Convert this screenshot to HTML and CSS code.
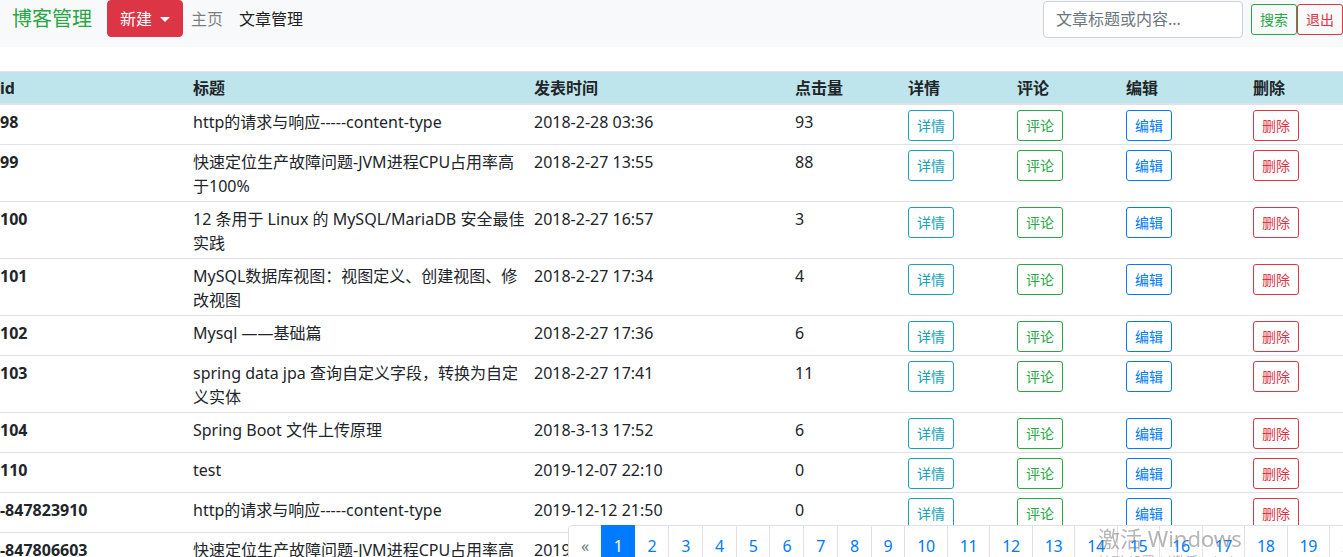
FILE: index.html
```html
<!DOCTYPE html>
<html lang="zh-CN">
<head>
<meta charset="utf-8">
<title>博客管理</title>
<link rel="stylesheet" href="styles.css">
</head>
<body>
<nav class="navbar">
  <div class="nav-left">
    <a class="brand" href="#">博客管理</a>
    <button class="btn btn-danger dropdown-toggle">新建</button>
    <a class="nav-link muted" href="#">主页</a>
    <a class="nav-link active" href="#">文章管理</a>
  </div>
  <form class="search-form">
    <input class="form-control" type="search" placeholder="文章标题或内容...">
    <button type="button" class="btn btn-sm outline-success">搜索</button>
    <button type="button" class="btn btn-sm outline-danger">退出</button>
  </form>
</nav>

<table class="table">
  <colgroup>
    <col class="c-id"><col class="c-title"><col class="c-time"><col class="c-click">
    <col class="c-act"><col class="c-act"><col class="c-edit"><col class="c-del">
  </colgroup>
  <thead>
    <tr>
      <th>id</th><th>标题</th><th>发表时间</th><th>点击量</th><th>详情</th><th>评论</th><th>编辑</th><th>删除</th>
    </tr>
  </thead>
  <tbody>
    <tr><th class="rowid">98</th><td>http的请求与响应-----content-type</td><td>2018-2-28 03:36</td><td>93</td>
      <td><button class="btn btn-sm outline-info">详情</button></td><td><button class="btn btn-sm outline-success">评论</button></td><td><button class="btn btn-sm outline-primary">编辑</button></td><td><button class="btn btn-sm outline-danger">删除</button></td></tr>
    <tr><th class="rowid">99</th><td>快速定位生产故障问题-JVM进程CPU占用率高于100%</td><td>2018-2-27 13:55</td><td>88</td>
      <td><button class="btn btn-sm outline-info">详情</button></td><td><button class="btn btn-sm outline-success">评论</button></td><td><button class="btn btn-sm outline-primary">编辑</button></td><td><button class="btn btn-sm outline-danger">删除</button></td></tr>
    <tr><th class="rowid">100</th><td>12 条用于 Linux 的 MySQL/MariaDB 安全最佳实践</td><td>2018-2-27 16:57</td><td>3</td>
      <td><button class="btn btn-sm outline-info">详情</button></td><td><button class="btn btn-sm outline-success">评论</button></td><td><button class="btn btn-sm outline-primary">编辑</button></td><td><button class="btn btn-sm outline-danger">删除</button></td></tr>
    <tr><th class="rowid">101</th><td>MySQL数据库视图：视图定义、创建视图、修改视图</td><td>2018-2-27 17:34</td><td>4</td>
      <td><button class="btn btn-sm outline-info">详情</button></td><td><button class="btn btn-sm outline-success">评论</button></td><td><button class="btn btn-sm outline-primary">编辑</button></td><td><button class="btn btn-sm outline-danger">删除</button></td></tr>
    <tr><th class="rowid">102</th><td>Mysql ——基础篇</td><td>2018-2-27 17:36</td><td>6</td>
      <td><button class="btn btn-sm outline-info">详情</button></td><td><button class="btn btn-sm outline-success">评论</button></td><td><button class="btn btn-sm outline-primary">编辑</button></td><td><button class="btn btn-sm outline-danger">删除</button></td></tr>
    <tr><th class="rowid">103</th><td>spring data jpa 查询自定义字段，转换为自定义实体</td><td>2018-2-27 17:41</td><td>11</td>
      <td><button class="btn btn-sm outline-info">详情</button></td><td><button class="btn btn-sm outline-success">评论</button></td><td><button class="btn btn-sm outline-primary">编辑</button></td><td><button class="btn btn-sm outline-danger">删除</button></td></tr>
    <tr><th class="rowid">104</th><td>Spring Boot 文件上传原理</td><td>2018-3-13 17:52</td><td>6</td>
      <td><button class="btn btn-sm outline-info">详情</button></td><td><button class="btn btn-sm outline-success">评论</button></td><td><button class="btn btn-sm outline-primary">编辑</button></td><td><button class="btn btn-sm outline-danger">删除</button></td></tr>
    <tr><th class="rowid">110</th><td>test</td><td>2019-12-07 22:10</td><td>0</td>
      <td><button class="btn btn-sm outline-info">详情</button></td><td><button class="btn btn-sm outline-success">评论</button></td><td><button class="btn btn-sm outline-primary">编辑</button></td><td><button class="btn btn-sm outline-danger">删除</button></td></tr>
    <tr><th class="rowid">-847823910</th><td>http的请求与响应-----content-type</td><td>2019-12-12 21:50</td><td>0</td>
      <td><button class="btn btn-sm outline-info">详情</button></td><td><button class="btn btn-sm outline-success">评论</button></td><td><button class="btn btn-sm outline-primary">编辑</button></td><td><button class="btn btn-sm outline-danger">删除</button></td></tr>
    <tr><th class="rowid">-847806603</th><td>快速定位生产故障问题-JVM进程CPU占用率高于100%</td><td>2019-12-12 21:50</td><td>0</td>
      <td><button class="btn btn-sm outline-info">详情</button></td><td><button class="btn btn-sm outline-success">评论</button></td><td><button class="btn btn-sm outline-primary">编辑</button></td><td><button class="btn btn-sm outline-danger">删除</button></td></tr>
  </tbody>
</table>

<ul class="pagination">
  <li class="page-item disabled"><a class="page-link" href="#">«</a></li>
  <li class="page-item active"><a class="page-link" href="#">1</a></li>
  <li class="page-item"><a class="page-link" href="#">2</a></li>
  <li class="page-item"><a class="page-link" href="#">3</a></li>
  <li class="page-item"><a class="page-link" href="#">4</a></li>
  <li class="page-item"><a class="page-link" href="#">5</a></li>
  <li class="page-item"><a class="page-link" href="#">6</a></li>
  <li class="page-item"><a class="page-link" href="#">7</a></li>
  <li class="page-item"><a class="page-link" href="#">8</a></li>
  <li class="page-item"><a class="page-link" href="#">9</a></li>
  <li class="page-item"><a class="page-link" href="#">10</a></li>
  <li class="page-item"><a class="page-link" href="#">11</a></li>
  <li class="page-item"><a class="page-link" href="#">12</a></li>
  <li class="page-item"><a class="page-link" href="#">13</a></li>
  <li class="page-item"><a class="page-link" href="#">14</a></li>
  <li class="page-item"><a class="page-link" href="#">15</a></li>
  <li class="page-item"><a class="page-link" href="#">16</a></li>
  <li class="page-item"><a class="page-link" href="#">17</a></li>
  <li class="page-item"><a class="page-link" href="#">18</a></li>
  <li class="page-item"><a class="page-link" href="#">19</a></li>
  <li class="page-item"><a class="page-link" href="#">20</a></li>
  <li class="page-item"><a class="page-link" href="#">»</a></li>
</ul>

<div class="watermark">
  <div class="wm-title">激活 Windows</div>
  <div class="wm-sub">转到“设置”以激活 Windows。</div>
</div>
</body>
</html>
```

FILE: styles.css
```css
*, *::before, *::after { box-sizing: border-box; }

html, body {
  margin: 0;
  overflow: hidden;
}

body {
  font-family: "Noto Sans", "Noto Sans CJK SC", sans-serif;
  font-size: 16px;
  line-height: 1.5;
  color: #212529;
  background: #fff;
}

a { text-decoration: none; }

/* navbar */
.navbar {
  display: flex;
  justify-content: space-between;
  align-items: flex-start;
  background: #f8f9fa;
  height: 47px;
  padding: 0 0 0 12px;
}
.nav-left {
  display: flex;
  align-items: center;
  height: 37px;
}
.brand {
  font-size: 20px;
  line-height: 30px;
  color: #28a745;
  margin-right: 15px;
}
.nav-link {
  padding: 0 8px;
  line-height: 24px;
}
.nav-link.muted { color: rgba(0,0,0,.5); }
.nav-link.active { color: rgba(0,0,0,.9); }

.btn {
  display: inline-block;
  font-family: inherit;
  font-size: 16px;
  line-height: 1.5;
  padding: 6px 12px;
  border: 1px solid transparent;
  border-radius: 4px;
  background: transparent;
  cursor: pointer;
  white-space: nowrap;
}
.btn-danger {
  background: #dc3545;
  border-color: #dc3545;
  color: #fff;
  height: 37px;
  padding: 5px 12px;
}
.dropdown-toggle::after {
  content: "";
  display: inline-block;
  margin-left: 8px;
  vertical-align: 3px;
  border-top: 5px solid #fff;
  border-left: 5px solid transparent;
  border-right: 5px solid transparent;
}
.btn-sm {
  font-size: 14px;
  line-height: 21px;
  padding: 4px 8px;
  border-radius: 3px;
}
.outline-info { color: #17a2b8; border-color: #17a2b8; }
.outline-success { color: #28a745; border-color: #28a745; }
.outline-primary { color: #007bff; border-color: #007bff; }
.outline-danger { color: #dc3545; border-color: #dc3545; }

.search-form {
  display: flex;
  align-items: center;
  height: 38px;
}
.form-control {
  width: 200px;
  height: 37px;
  margin-right: 8px;
  padding: 6px 12px;
  font-family: inherit;
  font-size: 16px;
  color: #495057;
  background: #fff;
  border: 1px solid #ced4da;
  border-radius: 4px;
}
.form-control::placeholder { color: #6c757d; }
.search-form .btn-sm { margin-top: 1px; }

/* table */
.table {
  width: 1343px;
  table-layout: fixed;
  border-collapse: collapse;
  margin-top: 24px;
}
.c-id { width: 188px; }
.c-title { width: 341px; }
.c-time { width: 261px; }
.c-click { width: 113px; }
.c-act { width: 109px; }
.c-edit { width: 127px; }
.c-del { width: 95px; }

.table th, .table td {
  padding: 4px 4px 4px 5px;
  text-align: left;
  vertical-align: top;
  border-top: 1px solid #dee2e6;
}
.table th:first-child { padding-left: 0; }
.table thead th {
  background: #bee5eb;
  font-weight: bold;
  vertical-align: bottom;
  border-bottom: 2px solid #dee2e6;
  padding-top: 4px;
  padding-bottom: 3px;
}
.table tbody td, .table tbody th { padding-top: 5px; padding-bottom: 3px; }
.table th.rowid { font-weight: bold; }

/* pagination */
.pagination {
  position: fixed;
  left: 568px;
  top: 525px;
  display: flex;
  margin: 0;
  padding: 0;
  list-style: none;
  white-space: nowrap;
}
.page-link {
  display: block;
  padding: 8px 12px;
  margin-left: -1px;
  line-height: 24px;
  letter-spacing: -0.42px;
  color: #007bff;
  background: #fff;
  border: 1px solid #dee2e6;
}
.page-item:first-child .page-link {
  margin-left: 0;
  border-top-left-radius: 4px;
  border-bottom-left-radius: 4px;
}
.page-item.active .page-link {
  background: #007bff;
  border-color: #007bff;
  color: #fff;
  position: relative;
}
.page-item.disabled .page-link { color: #6c757d; }

/* windows activation watermark */
.watermark {
  position: fixed;
  left: 1098px;
  top: 523px;
  color: rgba(120,120,120,.55);
  pointer-events: none;
}
.wm-title {
  font-size: 22px;
  line-height: 30px;
}
.wm-sub {
  font-size: 13px;
  line-height: 16px;
}
```
